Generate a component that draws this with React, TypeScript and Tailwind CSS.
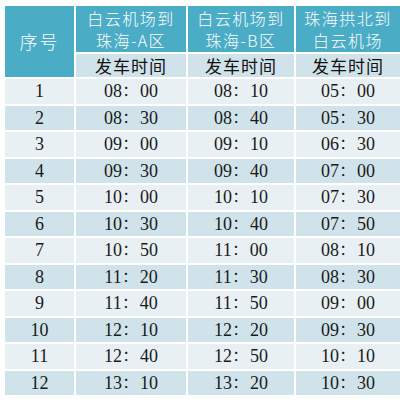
const rows: [string, string, string, string][] = [
  ["1", "08：00", "08：10", "05：00"],
  ["2", "08：30", "08：40", "05：30"],
  ["3", "09：00", "09：10", "06：30"],
  ["4", "09：30", "09：40", "07：00"],
  ["5", "10：00", "10：10", "07：30"],
  ["6", "10：30", "10：40", "07：50"],
  ["7", "10：50", "11：00", "08：10"],
  ["8", "11：20", "11：30", "08：30"],
  ["9", "11：40", "11：50", "09：00"],
  ["10", "12：10", "12：20", "09：30"],
  ["11", "12：40", "12：50", "10：10"],
  ["12", "13：10", "13：20", "10：30"],
];

const sans = "font-['Noto_Sans_CJK_SC',sans-serif]";
const serif = "font-['Liberation_Serif','Noto_Serif_CJK_SC','Noto_Sans_CJK_SC',serif]";

const App = () => {
  return (
    <div className="w-[400px] h-[403px] bg-white pt-[6px] pl-[5px]">
      <div className="grid grid-cols-[69px_110px_106px_104px] grid-rows-[46px_23px] auto-rows-[24.5px] gap-[2px] w-[393px] bg-white">
        {/* Header */}
        <div className={`row-span-2 bg-[#4bacc6] text-white text-[18px] font-light ${sans} flex items-center justify-center tracking-[2px]`}>
          序号
        </div>
        <div className={`bg-[#4bacc6] text-white text-[16px] leading-[22px] font-light ${sans} flex flex-col items-center justify-center tracking-[1.5px]`}>
          <span>白云机场到</span>
          <span>珠海-A区</span>
        </div>
        <div className={`bg-[#4bacc6] text-white text-[16px] leading-[22px] font-light ${sans} flex flex-col items-center justify-center tracking-[1.5px]`}>
          <span>白云机场到</span>
          <span>珠海-B区</span>
        </div>
        <div className={`bg-[#4bacc6] text-white text-[16px] leading-[22px] font-light ${sans} flex flex-col items-center justify-center tracking-[1.5px]`}>
          <span>珠海拱北到</span>
          <span>白云机场</span>
        </div>
        {["发车时间", "发车时间", "发车时间"].map((t, i) => (
          <div
            key={i}
            className={`bg-[#d0e3ea] text-[#111] text-[17px] leading-none ${sans} flex items-center justify-center tracking-[1px]`}
          >
            {t}
          </div>
        ))}

        {/* Body */}
        {rows.map((r, i) =>
          r.map((c, j) => (
            <div
              key={`${i}-${j}`}
              className={`${i % 2 === 0 ? "bg-[#e8f0f3]" : "bg-[#d0e3ea]"} text-[#1a1a1a] text-[18px] leading-none ${serif} flex items-center justify-center`}
            >
              {c}
            </div>
          ))
        )}
      </div>
    </div>
  );
};

export default App;
